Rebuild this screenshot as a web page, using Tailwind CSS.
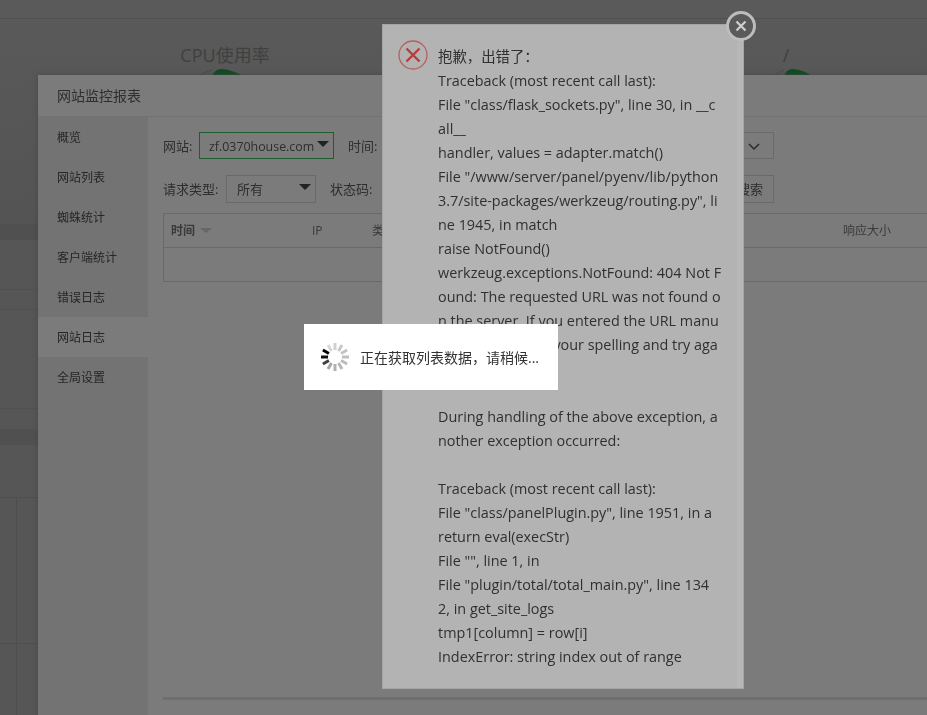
<!DOCTYPE html>
<html lang="zh-CN">

<head>
  <meta charset="UTF-8" />
  <title>网站监控报表</title>
  <script src="https://cdn.jsdelivr.net/npm/@tailwindcss/browser@4"></script>
</head>

<body class="h-[715px] w-[927px] overflow-hidden bg-[#565656] font-['Open_Sans','Noto_Sans_CJK_SC',sans-serif] text-[#333]">

  <!-- Dashboard behind the dialogs -->
  <div class="h-[715px] w-full">
    <div class="h-[18px] bg-[#5a5a5a]"></div>
    <div class="flex h-[206px] justify-between border-t border-[#515151] bg-gradient-to-b from-[#595959] to-[#545454] pr-[121px] text-[18px] leading-[20px] text-[#404040]">
      <div class="flex w-[450px] flex-col items-center pt-[26px]">
        <span>CPU使用率</span>
        <svg class="mt-[2px] h-[10px] w-[60px]" viewBox="0 0 60 10">
          <path d="M4 9Q9 5 17 3" fill="none" stroke="#4a4a4a" stroke-width="1" />
          <path d="M17 9Q19 3 26 2Q38 3 48 9Z" fill="#0b4a20" />
        </svg>
      </div>
      <div class="flex w-[40px] flex-col items-center pt-[26px]">
        <span>/</span>
        <svg class="mt-[2px] ml-[22px] h-[10px] w-[50px]" viewBox="0 0 50 10">
          <path d="M2 9Q6 5 12 3" fill="none" stroke="#4a4a4a" stroke-width="1" />
          <path d="M12 9Q14 3 20 2Q32 3 40 9Z" fill="#0b4a20" />
        </svg>
      </div>
    </div>
    <div class="h-[16px] bg-[#505050]"></div>
    <div class="h-[50px] border-b border-[#505050]"></div>
    <div class="h-[20px] border-b border-[#505050]"></div>
    <div class="h-[99px] border-b border-[#505050]"></div>
    <div class="h-[20px]"></div>
    <div class="h-[16px] bg-[#505050]"></div>
    <div class="h-[53px] border-b border-[#4f4f4f]"></div>
    <div class="h-[146px] border-b border-[#4f4f4f] pl-[16px]">
      <div class="h-full w-px bg-[#4e4e4e]"></div>
    </div>
    <div class="h-[71px] pl-[16px]">
      <div class="h-full w-px bg-[#4e4e4e]"></div>
    </div>
  </div>

  <!-- Site report window -->
  <div class="fixed top-[75px] left-[38px] flex h-[640px] w-[889px] flex-col bg-[#7b7b7b] shadow-[0_0_5px_#474747]">
    <div class="h-[42px] border-b border-[#727272] pl-[19px] text-[14px] leading-[41px] text-[#2e2e2e]">网站监控报表</div>
    <div class="flex min-h-0 flex-1">
      <ul class="w-[110px] bg-[#737373] text-[12px] text-[#262626]">
        <li class="h-[40px] pl-[19px] leading-[42px]">概览</li>
        <li class="h-[40px] pl-[19px] leading-[42px]">网站列表</li>
        <li class="h-[40px] pl-[19px] leading-[42px]">蜘蛛统计</li>
        <li class="h-[40px] pl-[19px] leading-[42px]">客户端统计</li>
        <li class="h-[40px] pl-[19px] leading-[42px]">错误日志</li>
        <li class="h-[40px] bg-[#7b7b7b] pl-[19px] leading-[42px]">网站日志</li>
        <li class="h-[40px] pl-[19px] leading-[42px]">全局设置</li>
      </ul>
      <div class="flex min-w-0 flex-1 flex-col pt-[15px] pl-[15px] text-[13px] text-[#2e2e2e]">
        <div class="flex h-[27px] items-center">
          <span class="w-[36px] pt-[3px] whitespace-nowrap">网站:</span>
          <div class="flex h-[27px] w-[135px] items-center justify-between border border-[#1f5c30] pr-[4px] pl-[9px]">
            <span class="pt-[3px] text-[12.4px] whitespace-nowrap">zf.0370house.com</span>
            <span class="mb-[4px] h-0 w-0 border-x-[6px] border-t-[6px] border-x-transparent border-t-[#222]"></span>
          </div>
          <span class="ml-[14px] pt-[3px]">时间:</span>
          <div class="mr-[153px] ml-auto flex h-[27px] w-[40px] items-center justify-center border border-[#6a6a6a]">
            <svg class="h-[12px] w-[12px]" viewBox="0 0 12 12" fill="none" stroke="#2a2a2a" stroke-width="1.5">
              <path d="M1 4l5 5 5-5" />
            </svg>
          </div>
        </div>
        <div class="mt-[16px] flex h-[28px] items-center">
          <span class="w-[63px] pt-[2px] whitespace-nowrap">请求类型:</span>
          <div class="flex h-[28px] w-[90px] items-center justify-between border border-[#6a6a6a] pr-[4px] pl-[10px]">
            <span class="pt-[2px]">所有</span>
            <span class="mb-[4px] h-0 w-0 border-x-[6px] border-t-[6px] border-x-transparent border-t-[#222]"></span>
          </div>
          <span class="ml-[14px] pt-[2px]">状态码:</span>
          <div class="mr-[153px] ml-auto flex h-[28px] w-[60px] items-center justify-end border border-[#6a6a6a] pt-[2px] pr-[10px]">搜索</div>
        </div>
        <div class="mt-[10px] w-[calc(100%+20px)] border border-[#6a6a6a] text-[12px]">
          <div class="flex h-[34px] items-center border-b border-[#6a6a6a] pl-[7px] text-[#3a3a3a]">
            <span class="flex w-[141px] items-center gap-[5px] font-bold">时间
              <span class="h-0 w-0 border-x-[6px] border-t-[5px] border-x-transparent border-t-[#666]"></span>
            </span>
            <span class="w-[60px]">IP</span>
            <span>类型</span>
            <span class="ml-[447px]">响应大小</span>
          </div>
          <div class="h-[33px]"></div>
        </div>
        <div class="mt-[415px] h-[3px] bg-[#6e6e6e]"></div>
      </div>
    </div>
  </div>

  <!-- Error dialog -->
  <div class="fixed top-[24px] left-[382px] flex h-[665px] w-[362px] border border-[#a5a5a5] bg-[#b3b3b3] pt-[15px] pl-[15px]">
    <div class="absolute inset-y-0 right-0 w-[6px] bg-[#b7b7b7]"></div>
    <svg class="h-[30px] w-[30px] shrink-0" viewBox="0 0 30 30" fill="none">
      <circle cx="15" cy="15" r="14" stroke="#b5605c" stroke-width="1.3" />
      <path d="M8.5 8.5l13 13M21.5 8.5l-13 13" stroke="#b83c3c" stroke-width="2.4" />
    </svg>
    <div class="relative mt-[5px] ml-[10px] text-[14.4px] leading-[24px] whitespace-nowrap text-[#303030]">
      <div>抱歉，出错了：</div>
      <div>Traceback (most recent call last):</div>
      <div>File "class/flask_sockets.py", line 30, in __c</div>
      <div>all__</div>
      <div>handler, values = adapter.match()</div>
      <div>File "/www/server/panel/pyenv/lib/python</div>
      <div>3.7/site-packages/werkzeug/routing.py", li</div>
      <div>ne 1945, in match</div>
      <div>raise NotFound()</div>
      <div>werkzeug.exceptions.NotFound: 404 Not F</div>
      <div>ound: The requested URL was not found o</div>
      <div>n the server. If you entered the URL manu</div>
      <div>ally please check your spelling and try aga</div>
      <div>in.</div>
      <div class="h-[24px]"></div>
      <div>During handling of the above exception, a</div>
      <div>nother exception occurred:</div>
      <div class="h-[24px]"></div>
      <div>Traceback (most recent call last):</div>
      <div>File "class/panelPlugin.py", line 1951, in a</div>
      <div>return eval(execStr)</div>
      <div>File "", line 1, in</div>
      <div>File "plugin/total/total_main.py", line 134</div>
      <div>2, in get_site_logs</div>
      <div>tmp1[column] = row[i]</div>
      <div>IndexError: string index out of range</div>
    </div>
  </div>

  <!-- Close button of the error dialog -->
  <button class="fixed top-[11px] left-[726px] flex h-[30px] w-[30px] items-center justify-center rounded-full border-[3px] border-[#bdbdbd] bg-[#5a5a5a]">
    <svg class="h-[12px] w-[12px]" viewBox="0 0 12 12" fill="none" stroke="#cfcfcf" stroke-width="2.2">
      <path d="M1.5 1.5l9 9M10.5 1.5l-9 9" />
    </svg>
  </button>

  <!-- Loading toast -->
  <div class="fixed top-[324px] left-[304px] flex h-[66px] w-[254px] items-center bg-white pl-[15px] text-[14px] text-[#333]">
    <svg class="h-[32px] w-[32px] shrink-0" viewBox="0 0 32 32" fill="none" stroke-width="3">
      <path d="M16 2v7" stroke="#d0d0d0" />
      <path d="M23 3.9l-3.5 6" stroke="#c8c8c8" />
      <path d="M28.1 9l-6 3.5" stroke="#c4c4c4" />
      <path d="M30 16h-7" stroke="#c0c0c0" />
      <path d="M28.1 23l-6-3.5" stroke="#bcbcbc" />
      <path d="M23 28.1l-3.5-6" stroke="#b8b8b8" />
      <path d="M16 30v-7" stroke="#b0b0b0" />
      <path d="M9 28.1l3.5-6" stroke="#a8a8a8" />
      <path d="M3.9 23l6-3.5" stroke="#404040" />
      <path d="M2 16h7" stroke="#101010" />
      <path d="M3.9 9l6 3.5" stroke="#000" />
      <path d="M9 3.9l3.5 6" stroke="#d8d8d8" />
    </svg>
    <span class="ml-[9px] pt-[1px] whitespace-nowrap">正在获取列表数据，请稍候...</span>
  </div>

</body>

</html>
